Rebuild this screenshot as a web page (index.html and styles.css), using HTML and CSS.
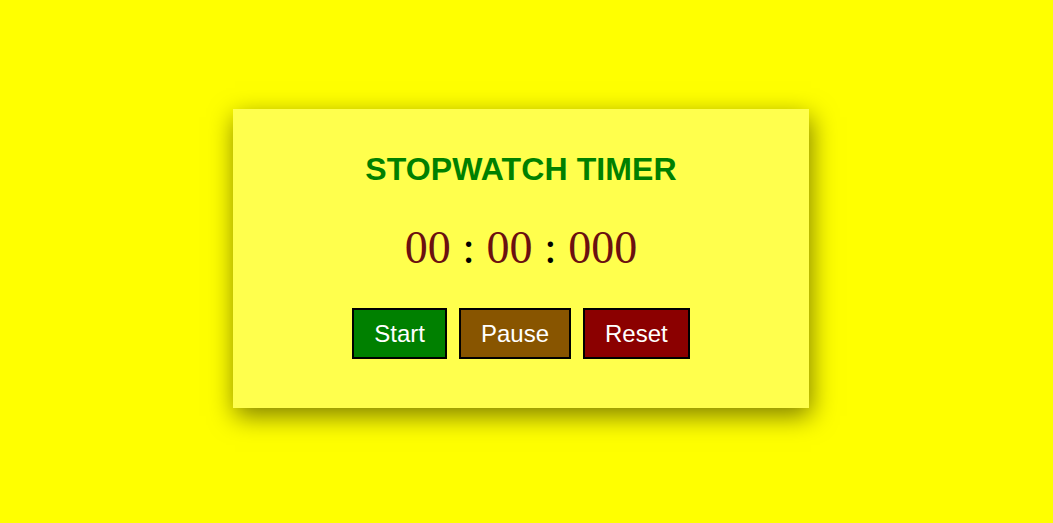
FILE: index.html
```html
<!DOCTYPE html>
<html lang="en">
<head>
<meta charset="utf-8">
<title>Stopwatch Timer</title>
<link rel="stylesheet" href="styles.css">
</head>
<body>
  <div class="card">
    <h1 class="title">STOPWATCH TIMER</h1>
    <div class="timer"><span class="num">00</span> : <span class="num">00</span> : <span class="num">000</span></div>
    <div class="buttons">
      <button class="btn start">Start</button>
      <button class="btn pause">Pause</button>
      <button class="btn reset">Reset</button>
    </div>
  </div>
</body>
</html>
```
FILE: styles.css
```css
html, body {
  margin: 0;
  height: 100%;
}
body {
  background: #ffff00;
  box-sizing: border-box;
  min-height: 523px;
  padding: 0 11px 6px 0;
  display: flex;
  align-items: center;
  justify-content: center;
}
.card {
  width: 576px;
  box-sizing: border-box;
  background: #ffff4d;
  padding: 40px 0 49px;
  text-align: center;
  box-shadow: 2px 8px 24px rgba(0, 0, 0, 0.5);
}
.title {
  margin: 0;
  font-family: "Comic Sans MS", "Liberation Sans", sans-serif;
  font-weight: bold;
  font-size: 32px;
  line-height: 40px;
  letter-spacing: 0.1px;
  color: #008000;
}
.timer {
  margin-top: 31px;
  font-family: "Liberation Serif", serif;
  font-size: 46px;
  line-height: 56px;
  color: #000;
}
.num {
  color: #6b1010;
}
.buttons {
  margin-top: 32px;
  display: flex;
  justify-content: center;
  gap: 12px;
}
.btn {
  font-family: "Liberation Sans", Arial, sans-serif;
  font-size: 24px;
  line-height: 27px;
  padding: 10px 20px;
  border: 2px solid #000;
  color: #fff;
  margin: 0;
}
.start { background: #008000; }
.pause { background: #885500; }
.reset { background: #8b0000; }
```
